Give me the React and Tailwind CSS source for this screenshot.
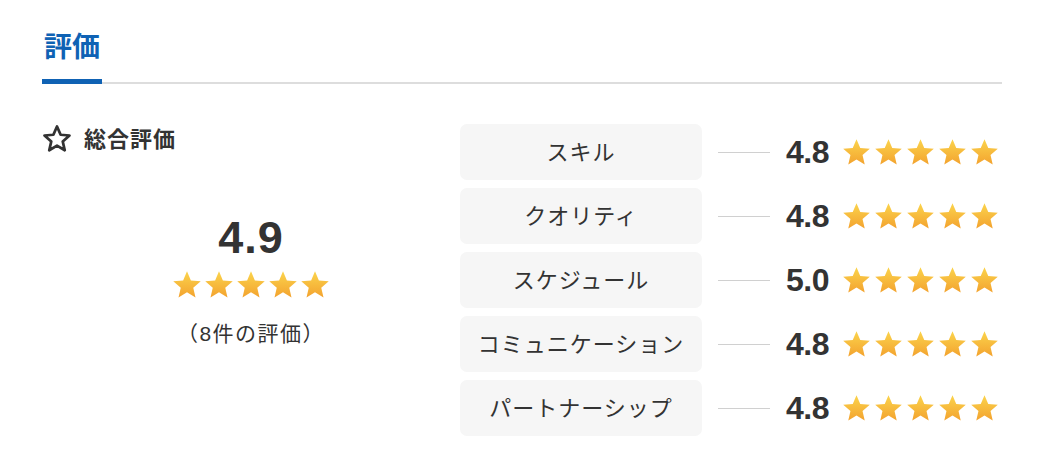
import { useId } from "react"

const ratings = [
  { label: "スキル", score: "4.8" },
  { label: "クオリティ", score: "4.8" },
  { label: "スケジュール", score: "5.0" },
  { label: "コミュニケーション", score: "4.8" },
  { label: "パートナーシップ", score: "4.8" },
]

const Star = ({ size = 26 }) => {
  const id = useId()
  return (
    <svg width={size} height={size} viewBox="0 0 24 24">
      <defs>
        <linearGradient id={id} x1="0" y1="0" x2="0" y2="1">
          <stop offset="0%" stopColor="#fbd44c" />
          <stop offset="100%" stopColor="#f3a32f" />
        </linearGradient>
      </defs>
      <polygon
        points="12,1 15.1,8.3 23,8.9 17,14.1 18.8,21.9 12,17.8 5.2,21.9 7,14.1 1,8.9 8.9,8.3"
        fill={`url(#${id})`}
      />
    </svg>
  )
}

const Stars = ({ size, gap }) => (
  <div className={`flex ${gap}`}>
    {[0, 1, 2, 3, 4].map(i => <Star key={i} size={size} />)}
  </div>
)

const App = () => {
  return (
    <div className="w-[1044px] h-[476px] bg-white pl-[42px] pt-[28px] text-[#333]" style={{ fontFamily: '"Liberation Sans", "Noto Sans CJK JP", sans-serif' }}>
      <div className="w-[960px]">
        <h2 className="text-[28px] font-bold text-[#0f62b4] pl-[2px] leading-[40px]">評価</h2>
        <div className="relative mt-[14px] h-[2px] bg-[#dddddd]">
          <div className="absolute left-0 bottom-0 w-[60px] h-[5px] bg-[#0f62b4]"></div>
        </div>

        <div className="flex mt-[39px]">
          <div className="w-[418px]">
            <div className="flex items-center gap-[12px] h-[32px]">
              <svg width="30" height="30" viewBox="0 0 24 24" fill="none" stroke="#333" strokeWidth="2.2" strokeLinejoin="round">
                <polygon points="12,2 14.9,8.6 22,9.2 16.6,14 18.2,21 12,17.3 5.8,21 7.4,14 2,9.2 9.1,8.6" />
              </svg>
              <span className="text-[22px] font-bold tracking-[1px]">総合評価</span>
            </div>
            <div className="flex flex-col items-center mt-[56px]">
              <div className="text-[45px] font-bold leading-[54px] tracking-[1px]">4.9</div>
              <div className="mt-[5px]">
                <Stars size={30} gap="gap-[2px]" />
              </div>
              <div className="text-[21px] mt-[20px] leading-[28px] tracking-[1.5px]">（8件の評価）</div>
            </div>
          </div>

          <div className="flex flex-col gap-[8px] mt-[1px]">
            {ratings.map(r => (
              <div key={r.label} className="flex items-center">
                <div className="w-[242px] h-[56px] rounded-[7px] bg-[#f6f6f6] flex items-center justify-center text-[22px] tracking-[1px]">
                  {r.label}
                </div>
                <div className="w-[52px] h-[1px] bg-[#d0d0d0] ml-[16px]"></div>
                <div className="ml-[16px] text-[32px] font-bold w-[56px] tracking-[-0.5px]">{r.score}</div>
                <Stars size={29} gap="gap-[3px]" />
              </div>
            ))}
          </div>
        </div>
      </div>
    </div>
  )
}

export default App
